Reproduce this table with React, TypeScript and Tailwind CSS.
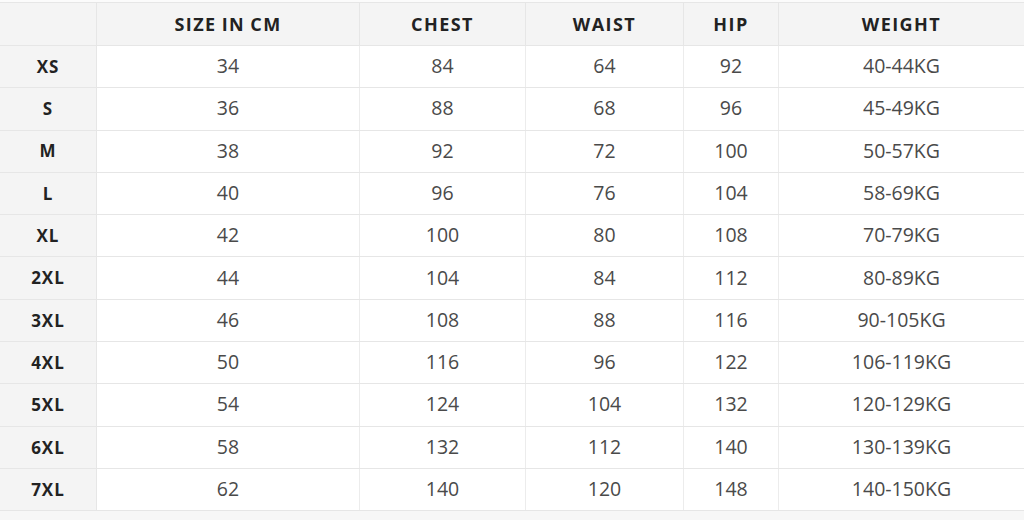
const headers = ["SIZE IN CM", "CHEST", "WAIST", "HIP", "WEIGHT"];

const rows: [string, string, string, string, string, string][] = [
  ["XS", "34", "84", "64", "92", "40-44KG"],
  ["S", "36", "88", "68", "96", "45-49KG"],
  ["M", "38", "92", "72", "100", "50-57KG"],
  ["L", "40", "96", "76", "104", "58-69KG"],
  ["XL", "42", "100", "80", "108", "70-79KG"],
  ["2XL", "44", "104", "84", "112", "80-89KG"],
  ["3XL", "46", "108", "88", "116", "90-105KG"],
  ["4XL", "50", "116", "96", "122", "106-119KG"],
  ["5XL", "54", "124", "104", "132", "120-129KG"],
  ["6XL", "58", "132", "112", "140", "130-139KG"],
  ["7XL", "62", "140", "120", "148", "140-150KG"],
];

const cols = "grid grid-cols-[97px_263px_166px_158px_95px_245px]";

export default function App() {
  return (
    <div className="w-[1024px] h-[520px] bg-[#f7f7f7] overflow-hidden font-['Open_Sans',sans-serif]">
      <div className="h-[2px] bg-[#fbfbfb]" />
      {/* header */}
      <div className={`${cols} h-[44px] bg-[#f4f4f4] border-t border-b border-[#e6e6e6]`}>
        <div className="border-r border-[#e6e6e6]" />
        {headers.map((h, i) => (
          <div
            key={h}
            className={`flex items-center justify-center text-[18px] font-bold tracking-[0.08em] [word-spacing:-1px] text-[#222] ${
              i < headers.length - 1 ? "border-r border-[#e6e6e6]" : ""
            }`}
          >
            {h}
          </div>
        ))}
      </div>
      {/* body */}
      {rows.map((r) => (
        <div key={r[0]} className={`${cols} h-[42.3px] bg-white border-b border-[#e6e6e6]`}>
          <div className="flex items-center justify-center bg-[#f4f4f4] border-r border-[#e6e6e6] text-[17px] font-bold tracking-[0.06em] text-[#222]">
            {r[0]}
          </div>
          {r.slice(1).map((v, i) => (
            <div
              key={i}
              className={`flex items-center justify-center pb-[2px] text-[19.5px] text-[#4a4a4a] ${
                i < 4 ? "border-r border-[#ececec]" : ""
              }`}
            >
              {v}
            </div>
          ))}
        </div>
      ))}
    </div>
  );
}
